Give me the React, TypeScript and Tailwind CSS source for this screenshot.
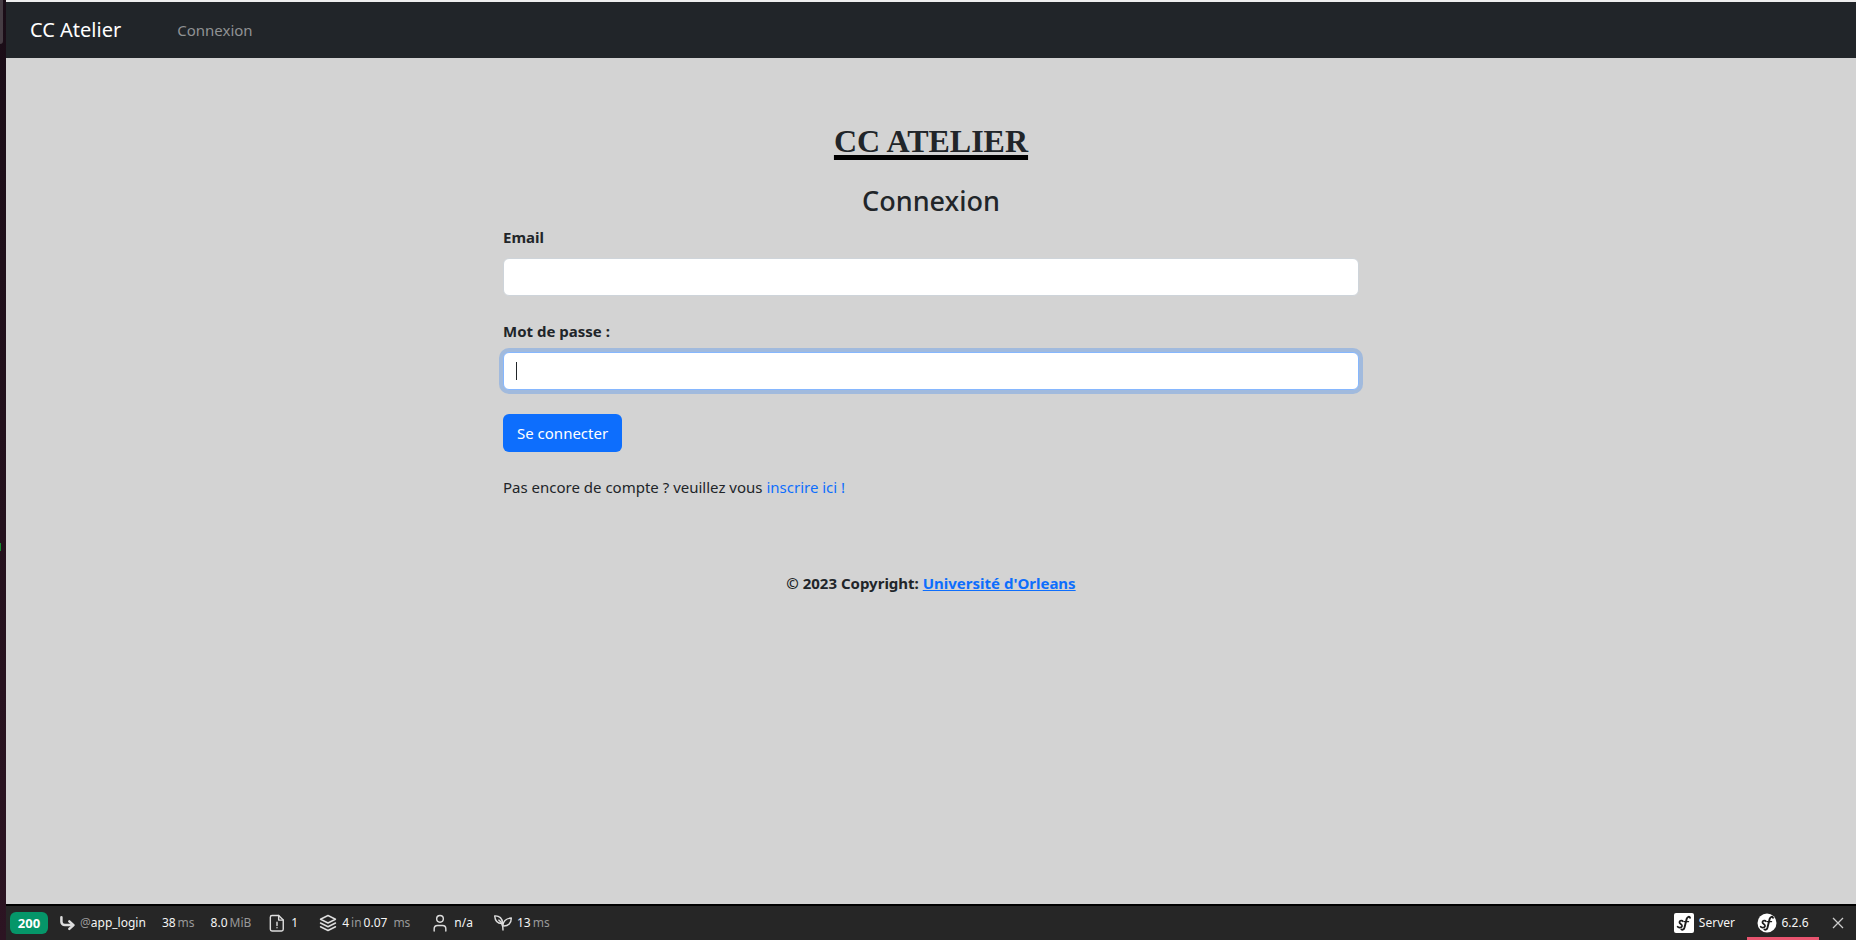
import React, { type ReactNode } from "react";

function SfGlyph() {
  return (
    <g fill="none" stroke="#1b1b1b" strokeLinecap="round" strokeLinejoin="round">
      <path d="M8.900 8.300C8.300 7.200 5.600 7.300 5.400 9c-.2 1.900 3 2.100 2.700 4.100-.3 1.900-3.800 2-4.500.6" strokeWidth="1.700" />
      <path d="M16 4.800c-.5-1.700-2.600-1.300-3.300 1L10.500 14.400c-.6 2.100-2 3-3.100 2" strokeWidth="1.900" />
      <path d="M10.200 8.600h4.400" strokeWidth="1.200" />
    </g>
  );
}

function Icon({ children }: { children: ReactNode }) {
  return (
    <svg
      aria-hidden="true"
      className="mr-1 h-5 w-5 shrink-0 text-[#dddddd]"
      viewBox="0 0 24 24"
      fill="none"
      stroke="currentColor"
      strokeWidth="1.700"
      strokeLinecap="round"
      strokeLinejoin="round"
    >
      {children}
    </svg>
  );
}

function Dim({ children }: { children: ReactNode }) {
  return <span className="text-[#999999]">{children}</span>;
}

function Toolbar() {
  return (
    <div className="flex h-9 shrink-0 items-center border-t-2 border-black bg-[#262626] pl-1 text-[12px] leading-5 whitespace-nowrap text-[#f5f5f5]">
      <span className="w-[38px] rounded-md bg-[#059669] py-px text-center text-[13px] font-bold text-white">200</span>
      <a href="#" className="ml-2 flex items-center">
        <Icon>
          <path d="M6.500 5v5.500a4 4 0 0 0 4 4H19" strokeWidth="3" />
          <path d="M16 10l5 4.500-5 4.500" strokeWidth="3" />
        </Icon>
        <Dim>@</Dim>app_login
      </a>
      <a href="#" className="ml-4 flex gap-0.5">38<Dim>ms</Dim></a>
      <a href="#" className="ml-4 flex gap-0.5">8.0<Dim>MiB</Dim></a>
      <a href="#" className="ml-4 flex items-center">
        <Icon>
          <path d="M14 3H6a2 2 0 0 0-2 2v14.500a2 2 0 0 0 2 2h11.500a2 2 0 0 0 2-2V8.500z" />
          <path d="M14 3v5.500h5.500M12 11v4M12 17.500v.3" />
        </Icon>
        1
      </a>
      <a href="#" className="ml-5 flex items-center">
        <Icon>
          <path d="M12 3l9 4.500-9 4.500-9-4.500z" />
          <path d="M3 12l9 4.500 9-4.500M3 16.500l9 4.500 9-4.500" />
        </Icon>
        <span>4</span>
        <span className="mx-0.5"><Dim>in</Dim></span>
        <span>0.07</span>
        <span className="ml-1.5"><Dim>ms</Dim></span>
      </a>
      <a href="#" className="ml-5 flex items-center">
        <Icon>
          <circle cx="12" cy="7" r="4" />
          <path d="M5 21.500v-2.500a4 4 0 0 1 4-4h6a4 4 0 0 1 4 4v2.500" />
        </Icon>
        n/a
      </a>
      <a href="#" className="ml-5 flex items-center">
        <Icon>
          <path d="M11.500 12.500C5.500 13 2.500 9 2 3.500c5.500-.5 9.500 3 9.500 9z" />
          <path d="M12 15.500c-.5-5.500 3.500-9 10-9.500 0 6-3.500 10-10 9.500z" />
          <path d="M7 8.500c3 2 5 5 5 12" />
        </Icon>
        <span>13</span>
        <span className="ml-0.5"><Dim>ms</Dim></span>
      </a>
      <a href="#" className="ml-auto flex items-center gap-[5px]">
        <svg aria-hidden="true" className="h-5 w-5" viewBox="0 0 20 20">
          <rect width="20" height="20" rx="2" fill="#ffffff" />
          <SfGlyph />
        </svg>
        Server
      </a>
      <a href="#" className="ml-3 flex h-full w-[72px] items-center justify-center gap-1 border-b-[3px] border-[#e8546f] pt-[3px]">
        <svg aria-hidden="true" className="h-5 w-5" viewBox="0 0 20 20">
          <circle cx="10" cy="10" r="9.500" fill="#ffffff" />
          <SfGlyph />
        </svg>
        6.2.6
      </a>
      <button type="button" aria-label="Close" className="flex h-full w-[37px] items-center justify-center">
        <svg aria-hidden="true" className="h-3 w-3" viewBox="0 0 12 12" stroke="#cccccc" strokeWidth="1.300">
          <path d="M1 1l10 10M11 1L1 11" />
        </svg>
      </button>
    </div>
  );
}

export default function App() {
  return (
    <div className="flex min-h-screen bg-[#d3d3d3] font-['Noto_Sans',sans-serif] text-[15px] leading-6 text-[#212529]">
      <div className="flex w-1.5 shrink-0 flex-col bg-gradient-to-b from-[#1a0d17] to-[#2c1422]">
        <div className="h-11 w-[3px] rounded-br bg-[#453c43]" />
        <div className="mt-[499px] h-2 w-px bg-[#148a2c]" />
      </div>
      <div className="flex min-w-0 grow flex-col">
        <nav className="flex h-[58px] shrink-0 items-center border-t-2 border-[#eeeeee] bg-[#212529] px-6">
          <a href="#" className="text-xl text-white">CC Atelier</a>
          <a href="#" className="ml-14 text-[#909294]">Connexion</a>
        </nav>
        <main className="mx-auto w-full max-w-[856px] grow">
          <h1 className="mt-[65px] text-center font-['Liberation_Serif',serif] text-[32px] leading-9 font-bold">
            <span className="underline decoration-black decoration-[5px] underline-offset-[3px] [text-decoration-skip-ink:none]">CC ATELIER</span>
          </h1>
          <h2 className="mt-6 text-center text-[27px] leading-9 font-medium">Connexion</h2>
          <form>
            <label htmlFor="email" className="mt-1.5 block font-bold">Email</label>
            <input
              id="email"
              type="email"
              className="mt-[9px] block h-[38px] w-full rounded-md border border-[#ced4da] bg-white px-3 outline-none"
            />
            <label htmlFor="password" className="mt-[23px] block font-bold">Mot de passe :</label>
            <div className="relative mt-[9px]">
              <input
                id="password"
                type="password"
                className="block h-[38px] w-full rounded-md border border-[#86b7fe] bg-white px-3 caret-transparent ring-4 ring-[#0d6efd]/25 outline-none"
              />
              <span className="absolute top-2.5 left-[13px] h-[18px] w-px bg-[#212529]" />
            </div>
            <button type="button" className="mt-6 h-[38px] rounded-md bg-[#0d6efd] px-3.5 text-white">Se connecter</button>
          </form>
          <p className="mt-[23px]">
            Pas encore de compte ? veuillez vous <a href="#" className="text-[#0d6efd]">inscrire ici !</a>
          </p>
          <footer className="mt-[72px] text-center font-bold">
            © 2023 Copyright: <a href="#" className="text-[#0d6efd] underline">Université d'Orleans</a>
          </footer>
        </main>
        <Toolbar />
      </div>
    </div>
  );
}
